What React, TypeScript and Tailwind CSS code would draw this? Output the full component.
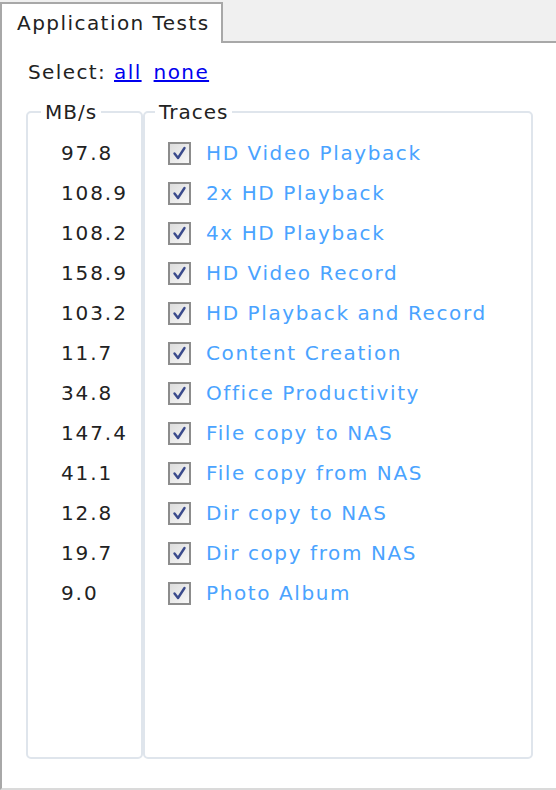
import React from "react";

const rows: [string, string][] = [
  ["97.8", "HD Video Playback"],
  ["108.9", "2x HD Playback"],
  ["108.2", "4x HD Playback"],
  ["158.9", "HD Video Record"],
  ["103.2", "HD Playback and Record"],
  ["11.7", "Content Creation"],
  ["34.8", "Office Productivity"],
  ["147.4", "File copy to NAS"],
  ["41.1", "File copy from NAS"],
  ["12.8", "Dir copy to NAS"],
  ["19.7", "Dir copy from NAS"],
  ["9.0", "Photo Album"],
];

function Check() {
  return (
    <div className="w-[23px] h-[23px] border-2 border-[#8c8c8c] bg-gradient-to-br from-[#dcdcdc] to-[#f8f8f8] flex items-center justify-center shrink-0">
      <svg width="15" height="15" viewBox="0 0 15 15">
        <path d="M2.5 7.5 L6 12 L12.5 2" fill="none" stroke="#3a4a8c" strokeWidth="2.4" strokeLinecap="round" strokeLinejoin="round" />
      </svg>
    </div>
  );
}

export default function App() {
  return (
    <div
      className="w-[556px] h-[790px] bg-[#f0f0f0] flex flex-col text-[#222]"
      style={{ fontFamily: '"DejaVu Sans", Verdana, sans-serif' }}
    >
      <div className="flex h-[43px] shrink-0">
        <div className="w-[223px] mt-[2px] border-l-2 border-t-2 border-r-2 border-[#a8a8a8] bg-white pl-[15px] pt-[5px] text-[20px] leading-[28px] tracking-[1.45px]">
          Application Tests
        </div>
        <div className="flex-1 border-b-2 border-[#a8a8a8]"></div>
      </div>
      <div className="flex-1 bg-white border-l-2 border-[#a8a8a8] border-b-2 border-b-[#dadada] flex flex-col pl-[24px] pr-[23px]">
        <div className="h-[58px] pt-[15px] text-[20px] leading-[28px] tracking-[1.4px] pl-[2px]">
          Select:{" "}
          <span className="text-[#0000ee] underline">all</span>
          <span className="ml-[12px] text-[#0000ee] underline">none</span>
        </div>
        <div className="flex h-[658px]">
          <fieldset className="w-[117px] border-2 border-[#dfe5ec] rounded-[5px]">
            <legend className="ml-[13px] px-[4px] text-[20px] leading-[22px] tracking-[1px]">MB/s</legend>
            <div className="pl-[33px] pt-[10px]">
              {rows.map(([v]) => (
                <div key={v} className="h-[40px] flex items-center text-[20px] tracking-[1.9px]">
                  {v}
                </div>
              ))}
            </div>
          </fieldset>
          <fieldset className="flex-1 border-2 border-[#dfe5ec] rounded-[5px]">
            <legend className="ml-[10px] px-[4px] text-[20px] leading-[22px] tracking-[1px]">Traces</legend>
            <div className="pl-[23px] pt-[10px]">
              {rows.map(([v, t]) => (
                <div key={t} className="h-[40px] flex items-center gap-[15px] text-[20px] tracking-[1.6px] text-[#4aa3ff]">
                  <Check />
                  <span>{t}</span>
                </div>
              ))}
            </div>
          </fieldset>
        </div>
      </div>
    </div>
  );
}
